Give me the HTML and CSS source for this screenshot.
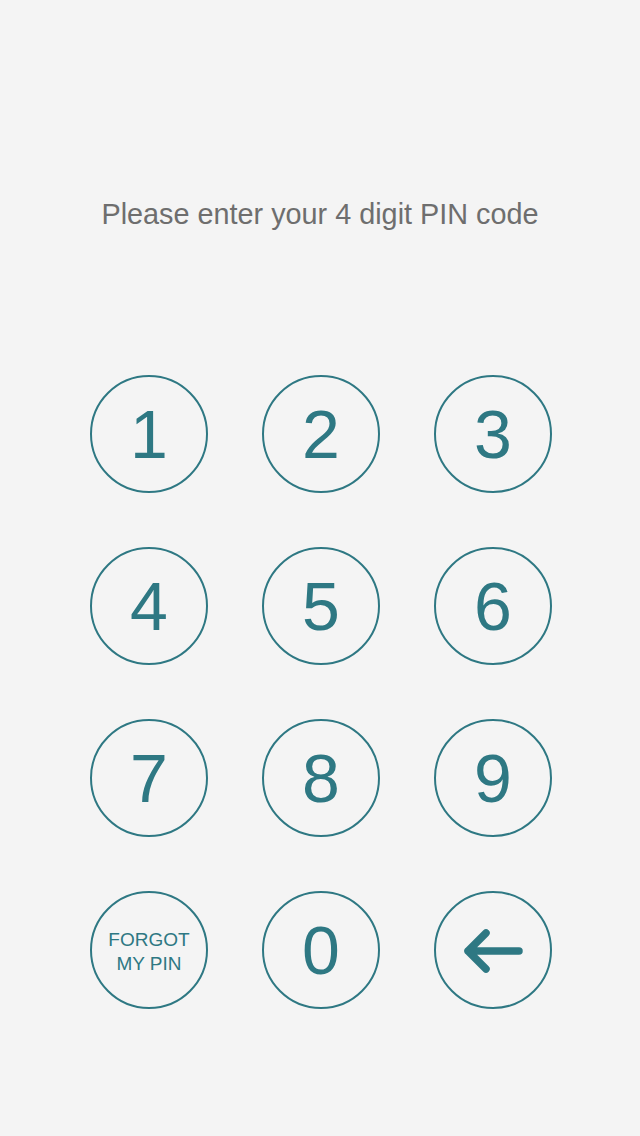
FILE: index.html
```html
<!DOCTYPE html>
<html>
<head>
<meta charset="utf-8">
<link rel="stylesheet" href="styles.css">
</head>
<body>
<main class="screen">
  <p class="prompt">Please enter your 4 digit PIN code</p>
  <div class="keypad">
    <button class="key">1</button>
    <button class="key">2</button>
    <button class="key">3</button>
    <button class="key">4</button>
    <button class="key">5</button>
    <button class="key">6</button>
    <button class="key">7</button>
    <button class="key">8</button>
    <button class="key">9</button>
    <button class="key key-text">FORGOT<br>MY PIN</button>
    <button class="key">0</button>
    <button class="key key-back" aria-label="Delete">
      <svg width="60" height="46" viewBox="0 0 60 46">
        <path d="M23 5 L5 23 L23 41 M5 23 L56 23" fill="none" stroke="#2e7883" stroke-width="7.5" stroke-linecap="round" stroke-linejoin="round"/>
      </svg>
    </button>
  </div>
</main>
</body>
</html>
```
FILE: styles.css
```css
html, body {
  margin: 0;
  padding: 0;
  background: #f4f4f4;
}
.screen {
  width: 640px;
  height: 1136px;
  display: flex;
  flex-direction: column;
  align-items: center;
  font-family: "Liberation Sans", Arial, sans-serif;
}
.prompt {
  margin: 199px 0 0 0;
  font-size: 28.8px;
  line-height: 30px;
  color: #6e6e6e;
}
.keypad {
  margin-top: 146px;
  margin-left: 2px;
  display: grid;
  grid-template-columns: repeat(3, 118px);
  grid-auto-rows: 118px;
  column-gap: 54px;
  row-gap: 54px;
}
.key {
  box-sizing: border-box;
  width: 118px;
  height: 118px;
  border: 2px solid #2e7883;
  border-radius: 50%;
  background: transparent;
  color: #2e7883;
  font-family: "Liberation Sans", Arial, sans-serif;
  font-size: 68px;
  line-height: 1;
  padding: 0;
  display: flex;
  align-items: center;
  justify-content: center;
}
.key-text {
  font-size: 19px;
  line-height: 24px;
  text-align: center;
  padding-top: 4px;
}
.key-back svg {
  display: block;
  margin-top: 2px;
}
```
